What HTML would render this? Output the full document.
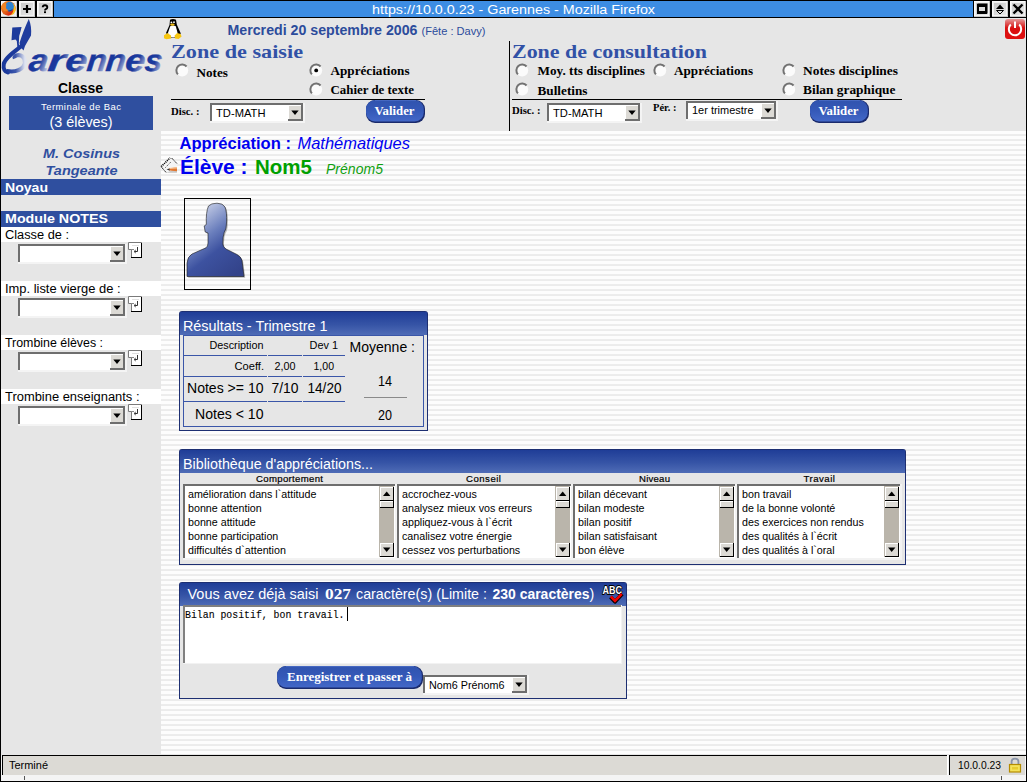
<!DOCTYPE html>
<html><head><meta charset="utf-8"><title>Garennes</title>
<style>html,body{margin:0;padding:0;background:#000;overflow:hidden;width:1027px;height:782px}</style>
</head><body><svg width="1027" height="782" viewBox="0 0 1027 782" style="display:block"><defs>
<linearGradient id="gbtn" x1="0" y1="0" x2="1" y2="1"><stop offset="0" stop-color="#c2c2c2"/><stop offset="0.6" stop-color="#dedede"/><stop offset="1" stop-color="#ececec"/></linearGradient>
<linearGradient id="gpill" x1="0" y1="0" x2="0" y2="1"><stop offset="0" stop-color="#3053ae"/><stop offset="0.5" stop-color="#3559b8"/><stop offset="1" stop-color="#4368c8"/></linearGradient>
<linearGradient id="gtitle" x1="0" y1="0" x2="0" y2="1"><stop offset="0" stop-color="#1f3d97"/><stop offset="0.55" stop-color="#3654a6"/><stop offset="1" stop-color="#4f6cb6"/></linearGradient>
<linearGradient id="glogo" x1="0" y1="0.2" x2="1" y2="0.9"><stop offset="0" stop-color="#12309a"/><stop offset="0.55" stop-color="#1e3c9e"/><stop offset="1" stop-color="#dfe4f2"/></linearGradient><linearGradient id="glogo2" x1="0" y1="0" x2="1" y2="0"><stop offset="0" stop-color="#1c3a9c"/><stop offset="0.5" stop-color="#3e58ac"/><stop offset="1" stop-color="#e0e4f0"/></linearGradient>
<linearGradient id="gsil" x1="0.2" y1="0" x2="0.8" y2="1"><stop offset="0" stop-color="#d8deef"/><stop offset="0.4" stop-color="#6b7fbd"/><stop offset="0.62" stop-color="#3d52a0"/><stop offset="1" stop-color="#33438a"/></linearGradient>
<linearGradient id="gpow" x1="0" y1="0" x2="0" y2="1"><stop offset="0" stop-color="#e59a9a"/><stop offset="0.45" stop-color="#d81010"/><stop offset="1" stop-color="#e01010"/></linearGradient>
</defs><rect x="0" y="0" width="1027" height="782" fill="#000" /><rect x="54" y="1" width="919" height="16" fill="#3d8de3" /><text x="513.5" y="13.5" font-family='"Liberation Sans",sans-serif' font-size="12.5" fill="#fff" text-anchor="middle" textLength="283" lengthAdjust="spacingAndGlyphs" >https://10.0.0.23 - Garennes - Mozilla Firefox</text><rect x="1" y="1" width="16" height="16" fill="url(#gbtn)"/><rect x="1" y="1" width="16" height="1" fill="#fafafa" /><rect x="1" y="1" width="1" height="16" fill="#fafafa" /><rect x="2" y="2" width="14" height="1" fill="#f0f0f0" /><rect x="2" y="2" width="1" height="14" fill="#f0f0f0" /><rect x="1" y="16" width="16" height="1" fill="#c8c8c8" /><rect x="16" y="1" width="1" height="16" fill="#c8c8c8" /><rect x="2" y="15" width="14" height="1" fill="#f2f2f2" /><rect x="15" y="2" width="1" height="14" fill="#f2f2f2" /><rect x="19" y="1" width="16" height="16" fill="url(#gbtn)"/><rect x="19" y="1" width="16" height="1" fill="#fafafa" /><rect x="19" y="1" width="1" height="16" fill="#fafafa" /><rect x="20" y="2" width="14" height="1" fill="#f0f0f0" /><rect x="20" y="2" width="1" height="14" fill="#f0f0f0" /><rect x="19" y="16" width="16" height="1" fill="#c8c8c8" /><rect x="34" y="1" width="1" height="16" fill="#c8c8c8" /><rect x="20" y="15" width="14" height="1" fill="#f2f2f2" /><rect x="33" y="2" width="1" height="14" fill="#f2f2f2" /><rect x="37" y="1" width="16" height="16" fill="url(#gbtn)"/><rect x="37" y="1" width="16" height="1" fill="#fafafa" /><rect x="37" y="1" width="1" height="16" fill="#fafafa" /><rect x="38" y="2" width="14" height="1" fill="#f0f0f0" /><rect x="38" y="2" width="1" height="14" fill="#f0f0f0" /><rect x="37" y="16" width="16" height="1" fill="#c8c8c8" /><rect x="52" y="1" width="1" height="16" fill="#c8c8c8" /><rect x="38" y="15" width="14" height="1" fill="#f2f2f2" /><rect x="51" y="2" width="1" height="14" fill="#f2f2f2" /><rect x="974" y="1" width="16" height="16" fill="url(#gbtn)"/><rect x="974" y="1" width="16" height="1" fill="#fafafa" /><rect x="974" y="1" width="1" height="16" fill="#fafafa" /><rect x="975" y="2" width="14" height="1" fill="#f0f0f0" /><rect x="975" y="2" width="1" height="14" fill="#f0f0f0" /><rect x="974" y="16" width="16" height="1" fill="#c8c8c8" /><rect x="989" y="1" width="1" height="16" fill="#c8c8c8" /><rect x="975" y="15" width="14" height="1" fill="#f2f2f2" /><rect x="988" y="2" width="1" height="14" fill="#f2f2f2" /><rect x="992" y="1" width="16" height="16" fill="url(#gbtn)"/><rect x="992" y="1" width="16" height="1" fill="#fafafa" /><rect x="992" y="1" width="1" height="16" fill="#fafafa" /><rect x="993" y="2" width="14" height="1" fill="#f0f0f0" /><rect x="993" y="2" width="1" height="14" fill="#f0f0f0" /><rect x="992" y="16" width="16" height="1" fill="#c8c8c8" /><rect x="1007" y="1" width="1" height="16" fill="#c8c8c8" /><rect x="993" y="15" width="14" height="1" fill="#f2f2f2" /><rect x="1006" y="2" width="1" height="14" fill="#f2f2f2" /><rect x="1010" y="1" width="16" height="16" fill="url(#gbtn)"/><rect x="1010" y="1" width="16" height="1" fill="#fafafa" /><rect x="1010" y="1" width="1" height="16" fill="#fafafa" /><rect x="1011" y="2" width="14" height="1" fill="#f0f0f0" /><rect x="1011" y="2" width="1" height="14" fill="#f0f0f0" /><rect x="1010" y="16" width="16" height="1" fill="#c8c8c8" /><rect x="1025" y="1" width="1" height="16" fill="#c8c8c8" /><rect x="1011" y="15" width="14" height="1" fill="#f2f2f2" /><rect x="1024" y="2" width="1" height="14" fill="#f2f2f2" /><linearGradient id="gff" x1="0" y1="0" x2="1" y2="1"><stop offset="0" stop-color="#f39028"/><stop offset="0.55" stop-color="#e05a18"/><stop offset="0.75" stop-color="#d82812"/><stop offset="1" stop-color="#f8c818"/></linearGradient><circle cx="8.3" cy="8.4" r="7.3" fill="url(#gff)"/><path d="M12,2.5 Q16.5,6 15.5,11 Q14,14.5 11,15.5 Q14.5,11 13,7 Z" fill="#fbc21c"/><ellipse cx="9.6" cy="6.6" rx="4.3" ry="4.9" fill="#2d82d2"/><path d="M6,9.5 Q9,12 13.2,8.6 Q12,11.6 8.8,11.4 Z" fill="#183e8a"/><path d="M1,7 Q3,2.5 5.5,3 Q7,5 6,7 Q5.5,9 8,10 Q10,10.3 9.5,9.5 Q6.5,12 4,11 Z" fill="#ef8224"/><path d="M27,5 L27,13 M23,9 L31,9" stroke="#000" stroke-width="2.2"/><path d="M42.7,7.3 Q42.8,5.2 45,5.2 Q47.3,5.2 47.3,7.2 Q47.3,8.5 45.8,9.2 Q45,9.6 45,10.6" fill="none" stroke="#000" stroke-width="1.9"/><rect x="44" y="11.3" width="2" height="1.8" fill="#000"/><rect x="978.5" y="4.5" width="8" height="8" fill="none" stroke="#000" stroke-width="2"/><rect x="979" y="7" width="7" height="3" fill="#000" opacity="0"/><rect x="977" y="4" width="10" height="10" fill="#000"/><rect x="979" y="7" width="6" height="4" fill="#dcdcdc"/><path d="M996,9 L1000,4.5 L1004,9 Z" fill="#000"/><path d="M996.5,10.5 L1003.5,10.5 L1000,14 Z" fill="none" stroke="#000" stroke-width="1"/><path d="M1013.5,4.5 L1022.5,13.5 M1022.5,4.5 L1013.5,13.5" stroke="#000" stroke-width="2.4"/><rect x="1" y="18" width="1025" height="737" fill="#e6e6e6" /><pattern id="stripes" x="0" y="131" width="10" height="5" patternUnits="userSpaceOnUse"><rect width="10" height="5" fill="#fdfdfd"/><rect y="3" width="10" height="1" fill="#ededed"/><rect y="4" width="10" height="1" fill="#ececec"/></pattern><rect x="161" y="131" width="865" height="623" fill="url(#stripes)" /><rect x="1" y="755" width="1025" height="26" fill="#f2f2f2" /><rect x="2" y="755" width="946" height="20" fill="#dcdad5" /><rect x="2" y="755" width="946" height="1" fill="#000" /><rect x="2" y="755" width="1" height="20" fill="#000" /><rect x="947" y="755" width="1" height="20" fill="#fff" /><rect x="949" y="755" width="77" height="20" fill="#dcdad5" /><rect x="949" y="755" width="77" height="1" fill="#000" /><rect x="949" y="755" width="1" height="20" fill="#000" /><rect x="1" y="775" width="1025" height="6" fill="#f4f4f4" /><rect x="24" y="776" width="1" height="4" fill="#555" /><rect x="1001" y="776" width="1" height="4" fill="#555" /><text x="9" y="768.5" font-family='"Liberation Sans",sans-serif' font-size="11" fill="#000" textLength="39" lengthAdjust="spacingAndGlyphs" >Terminé</text><text x="958" y="768.5" font-family='"Liberation Sans",sans-serif' font-size="11" fill="#000" textLength="43" lengthAdjust="spacingAndGlyphs" >10.0.0.23</text><path d="M1011.6,765 L1011.6,761.5 Q1011.6,758.6 1015,758.6 Q1018.4,758.6 1018.4,761.5 L1018.4,765" fill="none" stroke="#8a94a8" stroke-width="1.8"/><rect x="1009.5" y="764.5" width="11" height="7.5" fill="#f4e25a" stroke="#b48c00" stroke-width="1.2"/><rect x="1012" y="767" width="6" height="2.5" fill="#e8cc30"/><rect x="1025" y="756" width="1" height="19" fill="#f4f4f4" /><text x="28" y="71" font-family='"Liberation Sans",sans-serif' font-size="31" font-weight="bold" font-style="italic" fill="url(#glogo)" stroke="url(#glogo)" stroke-width="0.4" textLength="19.5" lengthAdjust="spacingAndGlyphs" transform="translate(7.46,0) skewX(-6)">a</text><text x="47" y="71" font-family='"Liberation Sans",sans-serif' font-size="31" font-weight="bold" font-style="italic" fill="url(#glogo)" stroke="url(#glogo)" stroke-width="0.4" textLength="17.5" lengthAdjust="spacingAndGlyphs" transform="translate(7.46,0) skewX(-6)">r</text><text x="64.5" y="71" font-family='"Liberation Sans",sans-serif' font-size="31" font-weight="bold" font-style="italic" fill="url(#glogo)" stroke="url(#glogo)" stroke-width="0.4" textLength="22" lengthAdjust="spacingAndGlyphs" transform="translate(7.46,0) skewX(-6)">e</text><text x="86" y="71" font-family='"Liberation Sans",sans-serif' font-size="31" font-weight="bold" font-style="italic" fill="url(#glogo)" stroke="url(#glogo)" stroke-width="0.4" textLength="20" lengthAdjust="spacingAndGlyphs" transform="translate(7.46,0) skewX(-6)">n</text><text x="105" y="71" font-family='"Liberation Sans",sans-serif' font-size="31" font-weight="bold" font-style="italic" fill="url(#glogo)" stroke="url(#glogo)" stroke-width="0.4" textLength="20" lengthAdjust="spacingAndGlyphs" transform="translate(7.46,0) skewX(-6)">n</text><text x="124.6" y="71" font-family='"Liberation Sans",sans-serif' font-size="31" font-weight="bold" font-style="italic" fill="url(#glogo)" stroke="url(#glogo)" stroke-width="0.4" textLength="20" lengthAdjust="spacingAndGlyphs" transform="translate(7.46,0) skewX(-6)">e</text><text x="144" y="71" font-family='"Liberation Sans",sans-serif' font-size="31" font-weight="bold" font-style="italic" fill="url(#glogo)" stroke="url(#glogo)" stroke-width="0.4" textLength="17.5" lengthAdjust="spacingAndGlyphs" transform="translate(7.46,0) skewX(-6)">s</text><path d="M28.8,19 C31,24 31.6,30 31,35.5 L25,46 L23.5,50.5 L20.5,47 L19.5,43 C22,35 25,27 28.8,19 Z" fill="#1f3c9e"/><path d="M12.3,27.6 L21.6,27 L20.6,31 L19.2,36 L18.8,44 L20.5,47.5 L17.5,48.5 L16.8,41 L15.5,39.5 L11.5,40.2 Z" fill="#1c3a9c"/><path d="M21.5,46 C14,52 5,58 3.8,64 C3,69 5,72 8,72.5" fill="none" stroke="#1c3a9c" stroke-width="4" stroke-linecap="round"/><path d="M6.5,71 C13,72 20,71 23.5,66.5 C26.5,61 24.5,55.5 18.5,55 C15.5,55 14,56.5 14.8,58.5" fill="none" stroke="url(#glogo2)" stroke-width="4"/><text x="58" y="92.8" font-family='"Liberation Sans",sans-serif' font-size="14" font-weight="bold" fill="#000" textLength="45" lengthAdjust="spacingAndGlyphs" >Classe</text><rect x="9" y="96" width="144" height="34" fill="#2f4f9f" /><text x="41" y="110" font-family='"Liberation Sans",sans-serif' font-size="9.5" fill="#fff" textLength="80" lengthAdjust="spacing" >Terminale de Bac</text><text x="49.5" y="126.5" font-family='"Liberation Sans",sans-serif' font-size="14" fill="#fff" textLength="63" lengthAdjust="spacingAndGlyphs" >(3 élèves)</text><text x="43" y="157.8" font-family='"Liberation Sans",sans-serif' font-size="13.5" font-weight="bold" font-style="italic" fill="#2f4f9f" textLength="77" lengthAdjust="spacingAndGlyphs" >M. Cosinus</text><text x="45.5" y="175.4" font-family='"Liberation Sans",sans-serif' font-size="13.5" font-weight="bold" font-style="italic" fill="#2f4f9f" textLength="72" lengthAdjust="spacingAndGlyphs" >Tangeante</text><rect x="1" y="179" width="160" height="16" fill="#2f4f9f" /><text x="5" y="192" font-family='"Liberation Sans",sans-serif' font-size="13.5" font-weight="bold" fill="#fff" textLength="43" lengthAdjust="spacingAndGlyphs" >Noyau</text><rect x="1" y="211" width="160" height="16" fill="#2f4f9f" /><text x="5" y="223.4" font-family='"Liberation Sans",sans-serif' font-size="13.5" font-weight="bold" fill="#fff" textLength="103" lengthAdjust="spacingAndGlyphs" >Module NOTES</text><rect x="1" y="227" width="160" height="15" fill="#ffffff" /><text x="5" y="239.1" font-family='"Liberation Sans",sans-serif' font-size="12.3" fill="#000" textLength="64" lengthAdjust="spacingAndGlyphs" >Classe de :</text><rect x="18" y="244" width="109" height="20" fill="#ffffff" /><rect x="18" y="244" width="109" height="2" fill="#6e6e6e" /><rect x="18" y="244" width="2" height="20" fill="#6e6e6e" /><rect x="18" y="262" width="109" height="2" fill="#f4f4f4" /><rect x="125" y="244" width="2" height="20" fill="#f4f4f4" /><rect x="110" y="246" width="15" height="16" fill="#dcdad5" /><rect x="110" y="246" width="15" height="1" fill="#ffffff" /><rect x="110" y="246" width="1" height="16" fill="#ffffff" /><rect x="110" y="260" width="15" height="2" fill="#6e6e6e" /><rect x="123" y="246" width="2" height="16" fill="#6e6e6e" /><path d="M113.3,251.60000000000002 L120.7,251.60000000000002 L117.0,256.0 Z" fill="#000"/><path d="M128.5,249.5 L128.5,242.5 L141.5,242.5 L141.5,257.5 L131.5,257.5 L131.5,249.5 Z" fill="#fff" stroke="#7a7a7a" stroke-width="1"/><rect x="131" y="257" width="11" height="1" fill="#000" /><rect x="141" y="243" width="1" height="15" fill="#000" /><rect x="132" y="245" width="7" height="1" fill="#e0e0e0" /><rect x="131" y="249" width="3" height="1" fill="#8a8a8a" /><path d="M137.5,247 L137.5,251.5 L134.5,251.5" stroke="#333" stroke-width="1" fill="none"/><path d="M135.8,250 L134,251.5 L135.8,253" stroke="#333" stroke-width="0.9" fill="none"/><rect x="1" y="281" width="160" height="15" fill="#ffffff" /><text x="5" y="293.1" font-family='"Liberation Sans",sans-serif' font-size="12.3" fill="#000" textLength="115.5" lengthAdjust="spacingAndGlyphs" >Imp. liste vierge de :</text><rect x="18" y="298" width="109" height="20" fill="#ffffff" /><rect x="18" y="298" width="109" height="2" fill="#6e6e6e" /><rect x="18" y="298" width="2" height="20" fill="#6e6e6e" /><rect x="18" y="316" width="109" height="2" fill="#f4f4f4" /><rect x="125" y="298" width="2" height="20" fill="#f4f4f4" /><rect x="110" y="300" width="15" height="16" fill="#dcdad5" /><rect x="110" y="300" width="15" height="1" fill="#ffffff" /><rect x="110" y="300" width="1" height="16" fill="#ffffff" /><rect x="110" y="314" width="15" height="2" fill="#6e6e6e" /><rect x="123" y="300" width="2" height="16" fill="#6e6e6e" /><path d="M113.3,305.6 L120.7,305.6 L117.0,310.0 Z" fill="#000"/><path d="M128.5,303.5 L128.5,296.5 L141.5,296.5 L141.5,311.5 L131.5,311.5 L131.5,303.5 Z" fill="#fff" stroke="#7a7a7a" stroke-width="1"/><rect x="131" y="311" width="11" height="1" fill="#000" /><rect x="141" y="297" width="1" height="15" fill="#000" /><rect x="132" y="299" width="7" height="1" fill="#e0e0e0" /><rect x="131" y="303" width="3" height="1" fill="#8a8a8a" /><path d="M137.5,301 L137.5,305.5 L134.5,305.5" stroke="#333" stroke-width="1" fill="none"/><path d="M135.8,304 L134,305.5 L135.8,307" stroke="#333" stroke-width="0.9" fill="none"/><rect x="1" y="335" width="160" height="15" fill="#ffffff" /><text x="5" y="347.1" font-family='"Liberation Sans",sans-serif' font-size="12.3" fill="#000" textLength="98" lengthAdjust="spacingAndGlyphs" >Trombine élèves :</text><rect x="18" y="352" width="109" height="20" fill="#ffffff" /><rect x="18" y="352" width="109" height="2" fill="#6e6e6e" /><rect x="18" y="352" width="2" height="20" fill="#6e6e6e" /><rect x="18" y="370" width="109" height="2" fill="#f4f4f4" /><rect x="125" y="352" width="2" height="20" fill="#f4f4f4" /><rect x="110" y="354" width="15" height="16" fill="#dcdad5" /><rect x="110" y="354" width="15" height="1" fill="#ffffff" /><rect x="110" y="354" width="1" height="16" fill="#ffffff" /><rect x="110" y="368" width="15" height="2" fill="#6e6e6e" /><rect x="123" y="354" width="2" height="16" fill="#6e6e6e" /><path d="M113.3,359.6 L120.7,359.6 L117.0,364.0 Z" fill="#000"/><path d="M128.5,357.5 L128.5,350.5 L141.5,350.5 L141.5,365.5 L131.5,365.5 L131.5,357.5 Z" fill="#fff" stroke="#7a7a7a" stroke-width="1"/><rect x="131" y="365" width="11" height="1" fill="#000" /><rect x="141" y="351" width="1" height="15" fill="#000" /><rect x="132" y="353" width="7" height="1" fill="#e0e0e0" /><rect x="131" y="357" width="3" height="1" fill="#8a8a8a" /><path d="M137.5,355 L137.5,359.5 L134.5,359.5" stroke="#333" stroke-width="1" fill="none"/><path d="M135.8,358 L134,359.5 L135.8,361" stroke="#333" stroke-width="0.9" fill="none"/><rect x="1" y="389" width="160" height="15" fill="#ffffff" /><text x="5" y="401.1" font-family='"Liberation Sans",sans-serif' font-size="12.3" fill="#000" textLength="134.5" lengthAdjust="spacingAndGlyphs" >Trombine enseignants :</text><rect x="18" y="406" width="109" height="20" fill="#ffffff" /><rect x="18" y="406" width="109" height="2" fill="#6e6e6e" /><rect x="18" y="406" width="2" height="20" fill="#6e6e6e" /><rect x="18" y="424" width="109" height="2" fill="#f4f4f4" /><rect x="125" y="406" width="2" height="20" fill="#f4f4f4" /><rect x="110" y="408" width="15" height="16" fill="#dcdad5" /><rect x="110" y="408" width="15" height="1" fill="#ffffff" /><rect x="110" y="408" width="1" height="16" fill="#ffffff" /><rect x="110" y="422" width="15" height="2" fill="#6e6e6e" /><rect x="123" y="408" width="2" height="16" fill="#6e6e6e" /><path d="M113.3,413.6 L120.7,413.6 L117.0,418.0 Z" fill="#000"/><path d="M128.5,411.5 L128.5,404.5 L141.5,404.5 L141.5,419.5 L131.5,419.5 L131.5,411.5 Z" fill="#fff" stroke="#7a7a7a" stroke-width="1"/><rect x="131" y="419" width="11" height="1" fill="#000" /><rect x="141" y="405" width="1" height="15" fill="#000" /><rect x="132" y="407" width="7" height="1" fill="#e0e0e0" /><rect x="131" y="411" width="3" height="1" fill="#8a8a8a" /><path d="M137.5,409 L137.5,413.5 L134.5,413.5" stroke="#333" stroke-width="1" fill="none"/><path d="M135.8,412 L134,413.5 L135.8,415" stroke="#333" stroke-width="0.9" fill="none"/><path d="M170,19.8 Q173,18.3 176,19.8 L176.8,24.5 L180.8,33.5 L177,37.5 L169,37.5 L166,33 L169.5,25 Z" fill="#000"/><path d="M170.2,26.2 Q173,24.8 175.8,26.2 L177.6,33 Q177.2,37.3 173.2,37.3 Q168.8,37.3 167.9,33 Z" fill="#fff"/><circle cx="171.4" cy="22.4" r="0.9" fill="#fff"/><circle cx="174" cy="22.2" r="0.9" fill="#fff"/><ellipse cx="172.4" cy="24.6" rx="2.3" ry="1.2" fill="#f2bd16"/><path d="M164,35.2 L167.5,33 L171,35.5 L171.2,38.6 L166.5,39.2 L164,38.2 Z" fill="#f7c612"/><path d="M174.6,35.6 L177.2,33 L180.6,34 L181.6,36.6 L178.6,38.9 L175,38.6 Z" fill="#f7c612"/><text x="227.5" y="35" font-family='"Liberation Sans",sans-serif' font-size="14" font-weight="bold" fill="#2c4c9c" textLength="190" lengthAdjust="spacingAndGlyphs" >Mercredi 20 septembre 2006</text><text x="421.5" y="35" font-family='"Liberation Sans",sans-serif' font-size="11" fill="#2c4c9c" textLength="64" lengthAdjust="spacingAndGlyphs" >(Fête : Davy)</text><text x="171" y="58.4" font-family='"Liberation Serif",serif' font-size="19.5" font-weight="bold" fill="#3151a6" textLength="132" lengthAdjust="spacingAndGlyphs" >Zone de saisie</text><circle cx="182.2" cy="70.4" r="6" fill="#fbfbfb"/><path d="M177.89999999999998,74.4 A5.7,5.7 0 0 1 186.6,66.5" stroke="#727272" stroke-width="2" fill="none"/><text x="196.5" y="77" font-family='"Liberation Serif",serif' font-size="13" font-weight="bold" fill="#000" textLength="31.5" lengthAdjust="spacingAndGlyphs" >Notes</text><circle cx="316.2" cy="70.4" r="6" fill="#fbfbfb"/><path d="M311.9,74.4 A5.7,5.7 0 0 1 320.59999999999997,66.5" stroke="#727272" stroke-width="2" fill="none"/><circle cx="316.2" cy="70.4" r="1.9" fill="#000"/><text x="330.5" y="74.7" font-family='"Liberation Serif",serif' font-size="13" font-weight="bold" fill="#000" textLength="79" lengthAdjust="spacingAndGlyphs" >Appréciations</text><circle cx="316.2" cy="89.4" r="6" fill="#fbfbfb"/><path d="M311.9,93.4 A5.7,5.7 0 0 1 320.59999999999997,85.5" stroke="#727272" stroke-width="2" fill="none"/><text x="330.5" y="93.7" font-family='"Liberation Serif",serif' font-size="13" font-weight="bold" fill="#000" textLength="83.5" lengthAdjust="spacingAndGlyphs" >Cahier de texte</text><rect x="171" y="99" width="254" height="1" fill="#000" /><text x="171" y="114.5" font-family='"Liberation Serif",serif' font-size="10.5" font-weight="bold" fill="#000" textLength="28.5" lengthAdjust="spacingAndGlyphs" >Disc. :</text><rect x="210" y="103" width="95" height="20" fill="#ffffff" /><rect x="210" y="103" width="95" height="2" fill="#6e6e6e" /><rect x="210" y="103" width="2" height="20" fill="#6e6e6e" /><rect x="210" y="121" width="95" height="2" fill="#f4f4f4" /><rect x="303" y="103" width="2" height="20" fill="#f4f4f4" /><rect x="288" y="105" width="15" height="16" fill="#dcdad5" /><rect x="288" y="105" width="15" height="1" fill="#ffffff" /><rect x="288" y="105" width="1" height="16" fill="#ffffff" /><rect x="288" y="119" width="15" height="2" fill="#6e6e6e" /><rect x="301" y="105" width="2" height="16" fill="#6e6e6e" /><path d="M291.3,110.6 L298.7,110.6 L295.0,115.0 Z" fill="#000"/><text x="216" y="116.7" font-family='"Liberation Sans",sans-serif' font-size="11" fill="#000" textLength="49.5" lengthAdjust="spacingAndGlyphs" >TD-MATH</text><rect x="366" y="100" width="59" height="23" rx="9" fill="#1a2a6c"/><rect x="366" y="100" width="57.8" height="21.4" rx="9" fill="url(#gpill)"/><path d="M375,100.6 L416,100.6" stroke="#5a7ad0" stroke-width="1" opacity="0.6"/><text x="374.5" y="114.9" font-family='"Liberation Serif",serif' font-size="13" font-weight="bold" fill="#fff" textLength="40" lengthAdjust="spacingAndGlyphs" >Valider</text><rect x="509" y="41" width="1" height="90" fill="#000" /><text x="512" y="58.4" font-family='"Liberation Serif",serif' font-size="19.5" font-weight="bold" fill="#3151a6" textLength="195" lengthAdjust="spacingAndGlyphs" >Zone de consultation</text><circle cx="522.2" cy="70.4" r="6" fill="#fbfbfb"/><path d="M517.9000000000001,74.4 A5.7,5.7 0 0 1 526.6,66.5" stroke="#727272" stroke-width="2" fill="none"/><text x="537.5" y="75" font-family='"Liberation Serif",serif' font-size="13" font-weight="bold" fill="#000" textLength="107.5" lengthAdjust="spacingAndGlyphs" >Moy. tts disciplines</text><circle cx="660.2" cy="70.4" r="6" fill="#fbfbfb"/><path d="M655.9000000000001,74.4 A5.7,5.7 0 0 1 664.6,66.5" stroke="#727272" stroke-width="2" fill="none"/><text x="674" y="75" font-family='"Liberation Serif",serif' font-size="13" font-weight="bold" fill="#000" textLength="79" lengthAdjust="spacingAndGlyphs" >Appréciations</text><circle cx="789.2" cy="70.4" r="6" fill="#fbfbfb"/><path d="M784.9000000000001,74.4 A5.7,5.7 0 0 1 793.6,66.5" stroke="#727272" stroke-width="2" fill="none"/><text x="803" y="75.2" font-family='"Liberation Serif",serif' font-size="13" font-weight="bold" fill="#000" textLength="95" lengthAdjust="spacingAndGlyphs" >Notes disciplines</text><circle cx="522.2" cy="89.4" r="6" fill="#fbfbfb"/><path d="M517.9000000000001,93.4 A5.7,5.7 0 0 1 526.6,85.5" stroke="#727272" stroke-width="2" fill="none"/><text x="537.5" y="95.4" font-family='"Liberation Serif",serif' font-size="13" font-weight="bold" fill="#000" textLength="50" lengthAdjust="spacingAndGlyphs" >Bulletins</text><circle cx="789.2" cy="89.4" r="6" fill="#fbfbfb"/><path d="M784.9000000000001,93.4 A5.7,5.7 0 0 1 793.6,85.5" stroke="#727272" stroke-width="2" fill="none"/><text x="803" y="94.2" font-family='"Liberation Serif",serif' font-size="13" font-weight="bold" fill="#000" textLength="92.5" lengthAdjust="spacingAndGlyphs" >Bilan graphique</text><rect x="512" y="99" width="390" height="1" fill="#000" /><text x="512" y="114.3" font-family='"Liberation Serif",serif' font-size="10.5" font-weight="bold" fill="#000" textLength="28.5" lengthAdjust="spacingAndGlyphs" >Disc. :</text><rect x="547" y="103" width="95" height="20" fill="#ffffff" /><rect x="547" y="103" width="95" height="2" fill="#6e6e6e" /><rect x="547" y="103" width="2" height="20" fill="#6e6e6e" /><rect x="547" y="121" width="95" height="2" fill="#f4f4f4" /><rect x="640" y="103" width="2" height="20" fill="#f4f4f4" /><rect x="625" y="105" width="15" height="16" fill="#dcdad5" /><rect x="625" y="105" width="15" height="1" fill="#ffffff" /><rect x="625" y="105" width="1" height="16" fill="#ffffff" /><rect x="625" y="119" width="15" height="2" fill="#6e6e6e" /><rect x="638" y="105" width="2" height="16" fill="#6e6e6e" /><path d="M628.3,110.6 L635.7,110.6 L632.0,115.0 Z" fill="#000"/><text x="553" y="116.7" font-family='"Liberation Sans",sans-serif' font-size="11" fill="#000" textLength="49.5" lengthAdjust="spacingAndGlyphs" >TD-MATH</text><text x="653" y="111" font-family='"Liberation Serif",serif' font-size="10.5" font-weight="bold" fill="#000" textLength="23.5" lengthAdjust="spacingAndGlyphs" >Pér. :</text><rect x="686" y="101" width="92" height="20" fill="#ffffff" /><rect x="686" y="101" width="92" height="2" fill="#6e6e6e" /><rect x="686" y="101" width="2" height="20" fill="#6e6e6e" /><rect x="686" y="119" width="92" height="2" fill="#f4f4f4" /><rect x="776" y="101" width="2" height="20" fill="#f4f4f4" /><rect x="761" y="103" width="15" height="16" fill="#dcdad5" /><rect x="761" y="103" width="15" height="1" fill="#ffffff" /><rect x="761" y="103" width="1" height="16" fill="#ffffff" /><rect x="761" y="117" width="15" height="2" fill="#6e6e6e" /><rect x="774" y="103" width="2" height="16" fill="#6e6e6e" /><path d="M764.3,108.6 L771.7,108.6 L768.0,113.0 Z" fill="#000"/><text x="692" y="113.7" font-family='"Liberation Sans",sans-serif' font-size="11" fill="#000" textLength="61.5" lengthAdjust="spacingAndGlyphs" >1er trimestre</text><rect x="810" y="100" width="59" height="23" rx="9" fill="#1a2a6c"/><rect x="810" y="100" width="57.8" height="21.4" rx="9" fill="url(#gpill)"/><path d="M819,100.6 L860,100.6" stroke="#5a7ad0" stroke-width="1" opacity="0.6"/><text x="818.5" y="114.9" font-family='"Liberation Serif",serif' font-size="13" font-weight="bold" fill="#fff" textLength="40" lengthAdjust="spacingAndGlyphs" >Valider</text><rect x="1005" y="19" width="20" height="20" rx="3" fill="url(#gpow)"/><path d="M1010.8,24.5 A6.2,6.2 0 1 0 1019.2,24.5" fill="none" stroke="#fff" stroke-width="2"/><rect x="1014" y="21.5" width="2" height="6.5" fill="#fff"/><text x="179.5" y="149" font-family='"Liberation Sans",sans-serif' font-size="17" font-weight="bold" fill="#0000f0" textLength="111.5" lengthAdjust="spacingAndGlyphs" >Appréciation :</text><text x="297.5" y="149" font-family='"Liberation Sans",sans-serif' font-size="17" font-style="italic" fill="#0000f0" textLength="112.5" lengthAdjust="spacingAndGlyphs" >Mathématiques</text><path d="M161.2,166.5 L170.2,158 L171.6,158 L177,163.6 L177,173 L166.2,173 Z" fill="#f4f4f4"/><path d="M166.5,172.8 L177,172.8 L177,168 Z" fill="#c8c8c8"/><path d="M161.2,166.5 L170.2,157.8" stroke="#000" stroke-width="1.6" stroke-dasharray="1.1,0.9" fill="none"/><path d="M171.6,158 L177,163.6 M161.2,166.8 L166.2,172.6" stroke="#000" stroke-width="1" stroke-dasharray="1.2,0.6" fill="none"/><path d="M165.5,167.5 L171.5,161.3" stroke="#000" stroke-width="0.9" stroke-dasharray="0.9,1.3" fill="none"/><path d="M169,168.6 L177,167.2 L177,171.2 L169.5,170.6 Z" fill="#e2762e"/><path d="M169.5,168 L177,167 L177,168.4 L170,169 Z" fill="#f6c090"/><path d="M166.5,169.3 L169.5,168.4 L169.8,170.8 Z" fill="#303030"/><text x="180" y="174" font-family='"Liberation Sans",sans-serif' font-size="20" font-weight="bold" fill="#0000f0" textLength="67.5" lengthAdjust="spacingAndGlyphs" >Élève :</text><text x="255" y="174" font-family='"Liberation Sans",sans-serif' font-size="20" font-weight="bold" fill="#00a000" textLength="57" lengthAdjust="spacingAndGlyphs" >Nom5</text><text x="326" y="174" font-family='"Liberation Sans",sans-serif' font-size="14" font-style="italic" fill="#10a010" textLength="57" lengthAdjust="spacingAndGlyphs" >Prénom5</text><rect x="184.5" y="198.5" width="66" height="91" fill="none" stroke="#000" stroke-width="1"/><path d="M187,276.5 L187,263 Q187.5,256.5 192,254 L206,247.8 Q208,246.5 208,243 L208,233 L205.2,232 L204.2,226 L206.3,224.5 Q205.8,212 208.5,206 Q211,203.2 217,203.2 Q223,203.2 225,207 Q227,212 226.6,222 Q226.6,229 224.2,232.5 Q222.8,236 222.8,244 Q223,247 226,249 L237,254.5 Q241,256.5 242,260.5 L244,276.5 Z" fill="#000" opacity="0.25" transform="translate(1.2,1.2)"/><path d="M187,276.5 L187,263 Q187.5,256.5 192,254 L206,247.8 Q208,246.5 208,243 L208,233 L205.2,232 L204.2,226 L206.3,224.5 Q205.8,212 208.5,206 Q211,203.2 217,203.2 Q223,203.2 225,207 Q227,212 226.6,222 Q226.6,229 224.2,232.5 Q222.8,236 222.8,244 Q223,247 226,249 L237,254.5 Q241,256.5 242,260.5 L244,276.5 Z" fill="url(#gsil)" stroke="#1a1a1a" stroke-width="0.6"/><path d="M179,431 L179,314 Q179,311 182,311 L425,311 Q428,311 428,314 L428,431 Z" fill="#1d2f72"/><rect x="180" y="312" width="247" height="118" fill="#e6e6e6" /><rect x="180" y="312" width="247" height="23" fill="url(#gtitle)"/><text x="183" y="330.8" font-family='"Liberation Sans",sans-serif' font-size="14" fill="#fff" textLength="144.5" lengthAdjust="spacingAndGlyphs" >Résultats - Trimestre 1</text><rect x="183.5" y="335.5" width="240" height="91" fill="none" stroke="#3a56a8" stroke-width="1"/><rect x="184" y="355" width="83" height="1" fill="#3a56a8" /><rect x="268" y="355" width="34" height="1" fill="#3a56a8" /><rect x="303" y="355" width="42" height="1" fill="#3a56a8" /><rect x="184" y="376" width="83" height="1" fill="#3a56a8" /><rect x="268" y="376" width="34" height="1" fill="#3a56a8" /><rect x="303" y="376" width="42" height="1" fill="#3a56a8" /><rect x="184" y="401" width="83" height="1" fill="#3a56a8" /><rect x="268" y="401" width="34" height="1" fill="#3a56a8" /><rect x="303" y="401" width="42" height="1" fill="#3a56a8" /><rect x="184" y="426" width="83" height="1" fill="#3a56a8" /><rect x="268" y="426" width="34" height="1" fill="#3a56a8" /><rect x="303" y="426" width="42" height="1" fill="#3a56a8" /><text x="209.5" y="348.8" font-family='"Liberation Sans",sans-serif' font-size="10.7" fill="#000" textLength="54" lengthAdjust="spacingAndGlyphs" >Description</text><text x="309.5" y="348.8" font-family='"Liberation Sans",sans-serif' font-size="10.7" fill="#000" textLength="28.5" lengthAdjust="spacingAndGlyphs" >Dev 1</text><text x="234.5" y="369.6" font-family='"Liberation Sans",sans-serif' font-size="10.7" fill="#000" textLength="29.5" lengthAdjust="spacingAndGlyphs" >Coeff.</text><text x="274.5" y="369.6" font-family='"Liberation Sans",sans-serif' font-size="10.7" fill="#000" textLength="21" lengthAdjust="spacingAndGlyphs" >2,00</text><text x="313.5" y="369.6" font-family='"Liberation Sans",sans-serif' font-size="10.7" fill="#000" textLength="20.5" lengthAdjust="spacingAndGlyphs" >1,00</text><text x="187" y="393.4" font-family='"Liberation Sans",sans-serif' font-size="14" fill="#000" textLength="76.5" lengthAdjust="spacingAndGlyphs" >Notes &gt;= 10</text><text x="271.5" y="393.4" font-family='"Liberation Sans",sans-serif' font-size="14" fill="#000" textLength="27" lengthAdjust="spacingAndGlyphs" >7/10</text><text x="307.5" y="393.4" font-family='"Liberation Sans",sans-serif' font-size="14" fill="#000" textLength="34" lengthAdjust="spacingAndGlyphs" >14/20</text><text x="195" y="418.6" font-family='"Liberation Sans",sans-serif' font-size="14" fill="#000" textLength="68.5" lengthAdjust="spacingAndGlyphs" >Notes &lt; 10</text><text x="349.5" y="351.6" font-family='"Liberation Sans",sans-serif' font-size="14" fill="#000" textLength="65.5" lengthAdjust="spacingAndGlyphs" >Moyenne :</text><text x="378" y="386.2" font-family='"Liberation Sans",sans-serif' font-size="14" fill="#000" textLength="14" lengthAdjust="spacingAndGlyphs" >14</text><rect x="364" y="397" width="43" height="1" fill="#8a8a8a" /><text x="378" y="419.9" font-family='"Liberation Sans",sans-serif' font-size="14" fill="#000" textLength="14" lengthAdjust="spacingAndGlyphs" >20</text><path d="M179,565 L179,452 Q179,449 182,449 L903,449 Q906,449 906,452 L906,565 Z" fill="#1d2f72"/><rect x="180" y="450" width="725" height="114" fill="#e6e6e6" /><rect x="180" y="450" width="725" height="23" fill="url(#gtitle)"/><text x="183" y="468.9" font-family='"Liberation Sans",sans-serif' font-size="14" fill="#fff" textLength="190" lengthAdjust="spacingAndGlyphs" >Bibliothèque d&#x27;appréciations...</text><text x="256" y="481.8" font-family='"Liberation Sans",sans-serif' font-size="9.6" fill="#000" textLength="67" lengthAdjust="spacing" stroke="#000" stroke-width="0.2">Comportement</text><text x="466" y="481.8" font-family='"Liberation Sans",sans-serif' font-size="9.6" fill="#000" textLength="35" lengthAdjust="spacing" stroke="#000" stroke-width="0.2">Conseil</text><text x="639" y="481.8" font-family='"Liberation Sans",sans-serif' font-size="9.6" fill="#000" textLength="31" lengthAdjust="spacing" stroke="#000" stroke-width="0.2">Niveau</text><text x="803.5" y="481.8" font-family='"Liberation Sans",sans-serif' font-size="9.6" fill="#000" textLength="31.5" lengthAdjust="spacing" stroke="#000" stroke-width="0.2">Travail</text><rect x="183" y="484" width="214" height="76" fill="#ffffff" /><rect x="183" y="484" width="214" height="2" fill="#6e6e6e" /><rect x="183" y="484" width="2" height="76" fill="#6e6e6e" /><rect x="183" y="558" width="214" height="2" fill="#f2f2f2" /><rect x="395" y="484" width="2" height="76" fill="#f2f2f2" /><rect x="379" y="486" width="15" height="71" fill="#bab5ab" /><rect x="380" y="487" width="14" height="14" fill="#dcdad5" /><rect x="380" y="487" width="14" height="1" fill="#ffffff" /><rect x="380" y="487" width="1" height="14" fill="#ffffff" /><rect x="380" y="500" width="14" height="1" fill="#000000" /><rect x="393" y="487" width="1" height="14" fill="#000000" /><path d="M383.0,496.0 L390.4,496.0 L386.7,491.6 Z" fill="#000"/><rect x="380" y="501" width="14" height="7" fill="#dcdad5" /><rect x="380" y="501" width="14" height="1" fill="#ffffff" /><rect x="380" y="501" width="1" height="7" fill="#ffffff" /><rect x="380" y="507" width="14" height="1" fill="#000000" /><rect x="393" y="501" width="1" height="7" fill="#000000" /><rect x="380" y="543" width="14" height="14" fill="#dcdad5" /><rect x="380" y="543" width="14" height="1" fill="#ffffff" /><rect x="380" y="543" width="1" height="14" fill="#ffffff" /><rect x="380" y="556" width="14" height="1" fill="#000000" /><rect x="393" y="543" width="1" height="14" fill="#000000" /><path d="M383.0,547.5999999999999 L390.4,547.5999999999999 L386.7,552.0 Z" fill="#000"/><text x="188" y="497.6" font-family='"Liberation Sans",sans-serif' font-size="10.7" fill="#000" >amélioration dans l`attitude</text><text x="188" y="511.6" font-family='"Liberation Sans",sans-serif' font-size="10.7" fill="#000" >bonne attention</text><text x="188" y="525.6" font-family='"Liberation Sans",sans-serif' font-size="10.7" fill="#000" >bonne attitude</text><text x="188" y="539.6" font-family='"Liberation Sans",sans-serif' font-size="10.7" fill="#000" >bonne participation</text><text x="188" y="553.6" font-family='"Liberation Sans",sans-serif' font-size="10.7" fill="#000" >difficultés d`attention</text><rect x="397" y="484" width="176" height="76" fill="#ffffff" /><rect x="397" y="484" width="176" height="2" fill="#6e6e6e" /><rect x="397" y="484" width="2" height="76" fill="#6e6e6e" /><rect x="397" y="558" width="176" height="2" fill="#f2f2f2" /><rect x="571" y="484" width="2" height="76" fill="#f2f2f2" /><rect x="555" y="486" width="15" height="71" fill="#bab5ab" /><rect x="556" y="487" width="14" height="14" fill="#dcdad5" /><rect x="556" y="487" width="14" height="1" fill="#ffffff" /><rect x="556" y="487" width="1" height="14" fill="#ffffff" /><rect x="556" y="500" width="14" height="1" fill="#000000" /><rect x="569" y="487" width="1" height="14" fill="#000000" /><path d="M559.0,496.0 L566.4000000000001,496.0 L562.7,491.6 Z" fill="#000"/><rect x="556" y="501" width="14" height="7" fill="#dcdad5" /><rect x="556" y="501" width="14" height="1" fill="#ffffff" /><rect x="556" y="501" width="1" height="7" fill="#ffffff" /><rect x="556" y="507" width="14" height="1" fill="#000000" /><rect x="569" y="501" width="1" height="7" fill="#000000" /><rect x="556" y="543" width="14" height="14" fill="#dcdad5" /><rect x="556" y="543" width="14" height="1" fill="#ffffff" /><rect x="556" y="543" width="1" height="14" fill="#ffffff" /><rect x="556" y="556" width="14" height="1" fill="#000000" /><rect x="569" y="543" width="1" height="14" fill="#000000" /><path d="M559.0,547.5999999999999 L566.4000000000001,547.5999999999999 L562.7,552.0 Z" fill="#000"/><text x="402" y="497.6" font-family='"Liberation Sans",sans-serif' font-size="10.7" fill="#000" >accrochez-vous</text><text x="402" y="511.6" font-family='"Liberation Sans",sans-serif' font-size="10.7" fill="#000" >analysez mieux vos erreurs</text><text x="402" y="525.6" font-family='"Liberation Sans",sans-serif' font-size="10.7" fill="#000" >appliquez-vous à l`écrit</text><text x="402" y="539.6" font-family='"Liberation Sans",sans-serif' font-size="10.7" fill="#000" >canalisez votre énergie</text><text x="402" y="553.6" font-family='"Liberation Sans",sans-serif' font-size="10.7" fill="#000" >cessez vos perturbations</text><rect x="573" y="484" width="164" height="76" fill="#ffffff" /><rect x="573" y="484" width="164" height="2" fill="#6e6e6e" /><rect x="573" y="484" width="2" height="76" fill="#6e6e6e" /><rect x="573" y="558" width="164" height="2" fill="#f2f2f2" /><rect x="735" y="484" width="2" height="76" fill="#f2f2f2" /><rect x="719" y="486" width="15" height="71" fill="#bab5ab" /><rect x="720" y="487" width="14" height="14" fill="#dcdad5" /><rect x="720" y="487" width="14" height="1" fill="#ffffff" /><rect x="720" y="487" width="1" height="14" fill="#ffffff" /><rect x="720" y="500" width="14" height="1" fill="#000000" /><rect x="733" y="487" width="1" height="14" fill="#000000" /><path d="M723.0,496.0 L730.4000000000001,496.0 L726.7,491.6 Z" fill="#000"/><rect x="720" y="501" width="14" height="7" fill="#dcdad5" /><rect x="720" y="501" width="14" height="1" fill="#ffffff" /><rect x="720" y="501" width="1" height="7" fill="#ffffff" /><rect x="720" y="507" width="14" height="1" fill="#000000" /><rect x="733" y="501" width="1" height="7" fill="#000000" /><rect x="720" y="543" width="14" height="14" fill="#dcdad5" /><rect x="720" y="543" width="14" height="1" fill="#ffffff" /><rect x="720" y="543" width="1" height="14" fill="#ffffff" /><rect x="720" y="556" width="14" height="1" fill="#000000" /><rect x="733" y="543" width="1" height="14" fill="#000000" /><path d="M723.0,547.5999999999999 L730.4000000000001,547.5999999999999 L726.7,552.0 Z" fill="#000"/><text x="578" y="497.6" font-family='"Liberation Sans",sans-serif' font-size="10.7" fill="#000" >bilan décevant</text><text x="578" y="511.6" font-family='"Liberation Sans",sans-serif' font-size="10.7" fill="#000" >bilan modeste</text><text x="578" y="525.6" font-family='"Liberation Sans",sans-serif' font-size="10.7" fill="#000" >bilan positif</text><text x="578" y="539.6" font-family='"Liberation Sans",sans-serif' font-size="10.7" fill="#000" >bilan satisfaisant</text><text x="578" y="553.6" font-family='"Liberation Sans",sans-serif' font-size="10.7" fill="#000" >bon élève</text><rect x="737" y="484" width="165" height="76" fill="#ffffff" /><rect x="737" y="484" width="165" height="2" fill="#6e6e6e" /><rect x="737" y="484" width="2" height="76" fill="#6e6e6e" /><rect x="737" y="558" width="165" height="2" fill="#f2f2f2" /><rect x="900" y="484" width="2" height="76" fill="#f2f2f2" /><rect x="884" y="486" width="15" height="71" fill="#bab5ab" /><rect x="885" y="487" width="14" height="14" fill="#dcdad5" /><rect x="885" y="487" width="14" height="1" fill="#ffffff" /><rect x="885" y="487" width="1" height="14" fill="#ffffff" /><rect x="885" y="500" width="14" height="1" fill="#000000" /><rect x="898" y="487" width="1" height="14" fill="#000000" /><path d="M888.0,496.0 L895.4000000000001,496.0 L891.7,491.6 Z" fill="#000"/><rect x="885" y="501" width="14" height="7" fill="#dcdad5" /><rect x="885" y="501" width="14" height="1" fill="#ffffff" /><rect x="885" y="501" width="1" height="7" fill="#ffffff" /><rect x="885" y="507" width="14" height="1" fill="#000000" /><rect x="898" y="501" width="1" height="7" fill="#000000" /><rect x="885" y="543" width="14" height="14" fill="#dcdad5" /><rect x="885" y="543" width="14" height="1" fill="#ffffff" /><rect x="885" y="543" width="1" height="14" fill="#ffffff" /><rect x="885" y="556" width="14" height="1" fill="#000000" /><rect x="898" y="543" width="1" height="14" fill="#000000" /><path d="M888.0,547.5999999999999 L895.4000000000001,547.5999999999999 L891.7,552.0 Z" fill="#000"/><text x="742" y="497.6" font-family='"Liberation Sans",sans-serif' font-size="10.7" fill="#000" >bon travail</text><text x="742" y="511.6" font-family='"Liberation Sans",sans-serif' font-size="10.7" fill="#000" >de la bonne volonté</text><text x="742" y="525.6" font-family='"Liberation Sans",sans-serif' font-size="10.7" fill="#000" >des exercices non rendus</text><text x="742" y="539.6" font-family='"Liberation Sans",sans-serif' font-size="10.7" fill="#000" >des qualités à l`écrit</text><text x="742" y="553.6" font-family='"Liberation Sans",sans-serif' font-size="10.7" fill="#000" >des qualités à l`oral</text><path d="M179,699 L179,585 Q179,582 182,582 L624,582 Q627,582 627,585 L627,699 Z" fill="#1d2f72"/><rect x="180" y="583" width="446" height="115" fill="#e6e6e6" /><rect x="180" y="583" width="446" height="23" fill="url(#gtitle)"/><text x="187.5" y="599" font-family='"Liberation Sans",sans-serif' font-size="14.3" fill="#fff" textLength="131" lengthAdjust="spacingAndGlyphs" >Vous avez déjà saisi</text><text x="325" y="599" font-family='"Liberation Serif",serif' font-size="14.5" font-weight="bold" fill="#fff" textLength="26" lengthAdjust="spacingAndGlyphs" >027</text><text x="356" y="599" font-family='"Liberation Sans",sans-serif' font-size="14.3" fill="#fff" textLength="131" lengthAdjust="spacingAndGlyphs" >caractère(s) (Limite :</text><text x="492.5" y="599" font-family='"Liberation Sans",sans-serif' font-size="14.3" font-weight="bold" fill="#fff" textLength="97" lengthAdjust="spacingAndGlyphs" >230 caractères</text><text x="589.5" y="599" font-family='"Liberation Sans",sans-serif' font-size="14.3" fill="#fff" >)</text><text x="602.5" y="593.8" font-family='"Liberation Sans",sans-serif' font-size="11.5" font-weight="bold" fill="#fff" stroke="#000" stroke-width="1.8" paint-order="stroke" stroke-linejoin="round" textLength="19.5" lengthAdjust="spacingAndGlyphs">ABC</text><path d="M610.5,597 L615,601.8 L622.2,594" fill="none" stroke="#000" stroke-width="3.8" stroke-linejoin="round"/><path d="M610.8,596.5 L615,600.8 L621.8,593.8" fill="none" stroke="#f00000" stroke-width="2.6"/><rect x="183" y="605" width="439" height="59" fill="#ffffff" /><rect x="183" y="605" width="439" height="2" fill="#808080" /><rect x="183" y="605" width="2" height="59" fill="#808080" /><rect x="183" y="663" width="439" height="1" fill="#f2f2f2" /><rect x="621" y="605" width="1" height="59" fill="#f2f2f2" /><text x="185" y="617.6" font-family='"Liberation Mono",monospace' font-size="10.2" fill="#000" textLength="159.5" lengthAdjust="spacingAndGlyphs" stroke="#000" stroke-width="0.1">Bilan positif, bon travail.</text><rect x="347" y="607" width="1" height="14" fill="#000" /><rect x="277" y="666" width="146" height="23" rx="9" fill="#1a2a6c"/><rect x="277" y="666" width="144.8" height="21.4" rx="9" fill="url(#gpill)"/><path d="M286,666.6 L414,666.6" stroke="#5a7ad0" stroke-width="1" opacity="0.6"/><text x="287" y="681.3" font-family='"Liberation Serif",serif' font-size="13" font-weight="bold" fill="#fff" textLength="125" lengthAdjust="spacingAndGlyphs" >Enregistrer et passer à</text><rect x="423" y="675" width="106" height="20" fill="#ffffff" /><rect x="423" y="675" width="106" height="2" fill="#6e6e6e" /><rect x="423" y="675" width="2" height="20" fill="#6e6e6e" /><rect x="423" y="693" width="106" height="2" fill="#f4f4f4" /><rect x="527" y="675" width="2" height="20" fill="#f4f4f4" /><rect x="512" y="677" width="15" height="16" fill="#dcdad5" /><rect x="512" y="677" width="15" height="1" fill="#ffffff" /><rect x="512" y="677" width="1" height="16" fill="#ffffff" /><rect x="512" y="691" width="15" height="2" fill="#6e6e6e" /><rect x="525" y="677" width="2" height="16" fill="#6e6e6e" /><path d="M515.3,682.5999999999999 L522.7,682.5999999999999 L519.0,687.0 Z" fill="#000"/><text x="429" y="689.2" font-family='"Liberation Sans",sans-serif' font-size="11" fill="#000" textLength="75.5" lengthAdjust="spacingAndGlyphs" >Nom6 Prénom6</text></svg></body></html>
